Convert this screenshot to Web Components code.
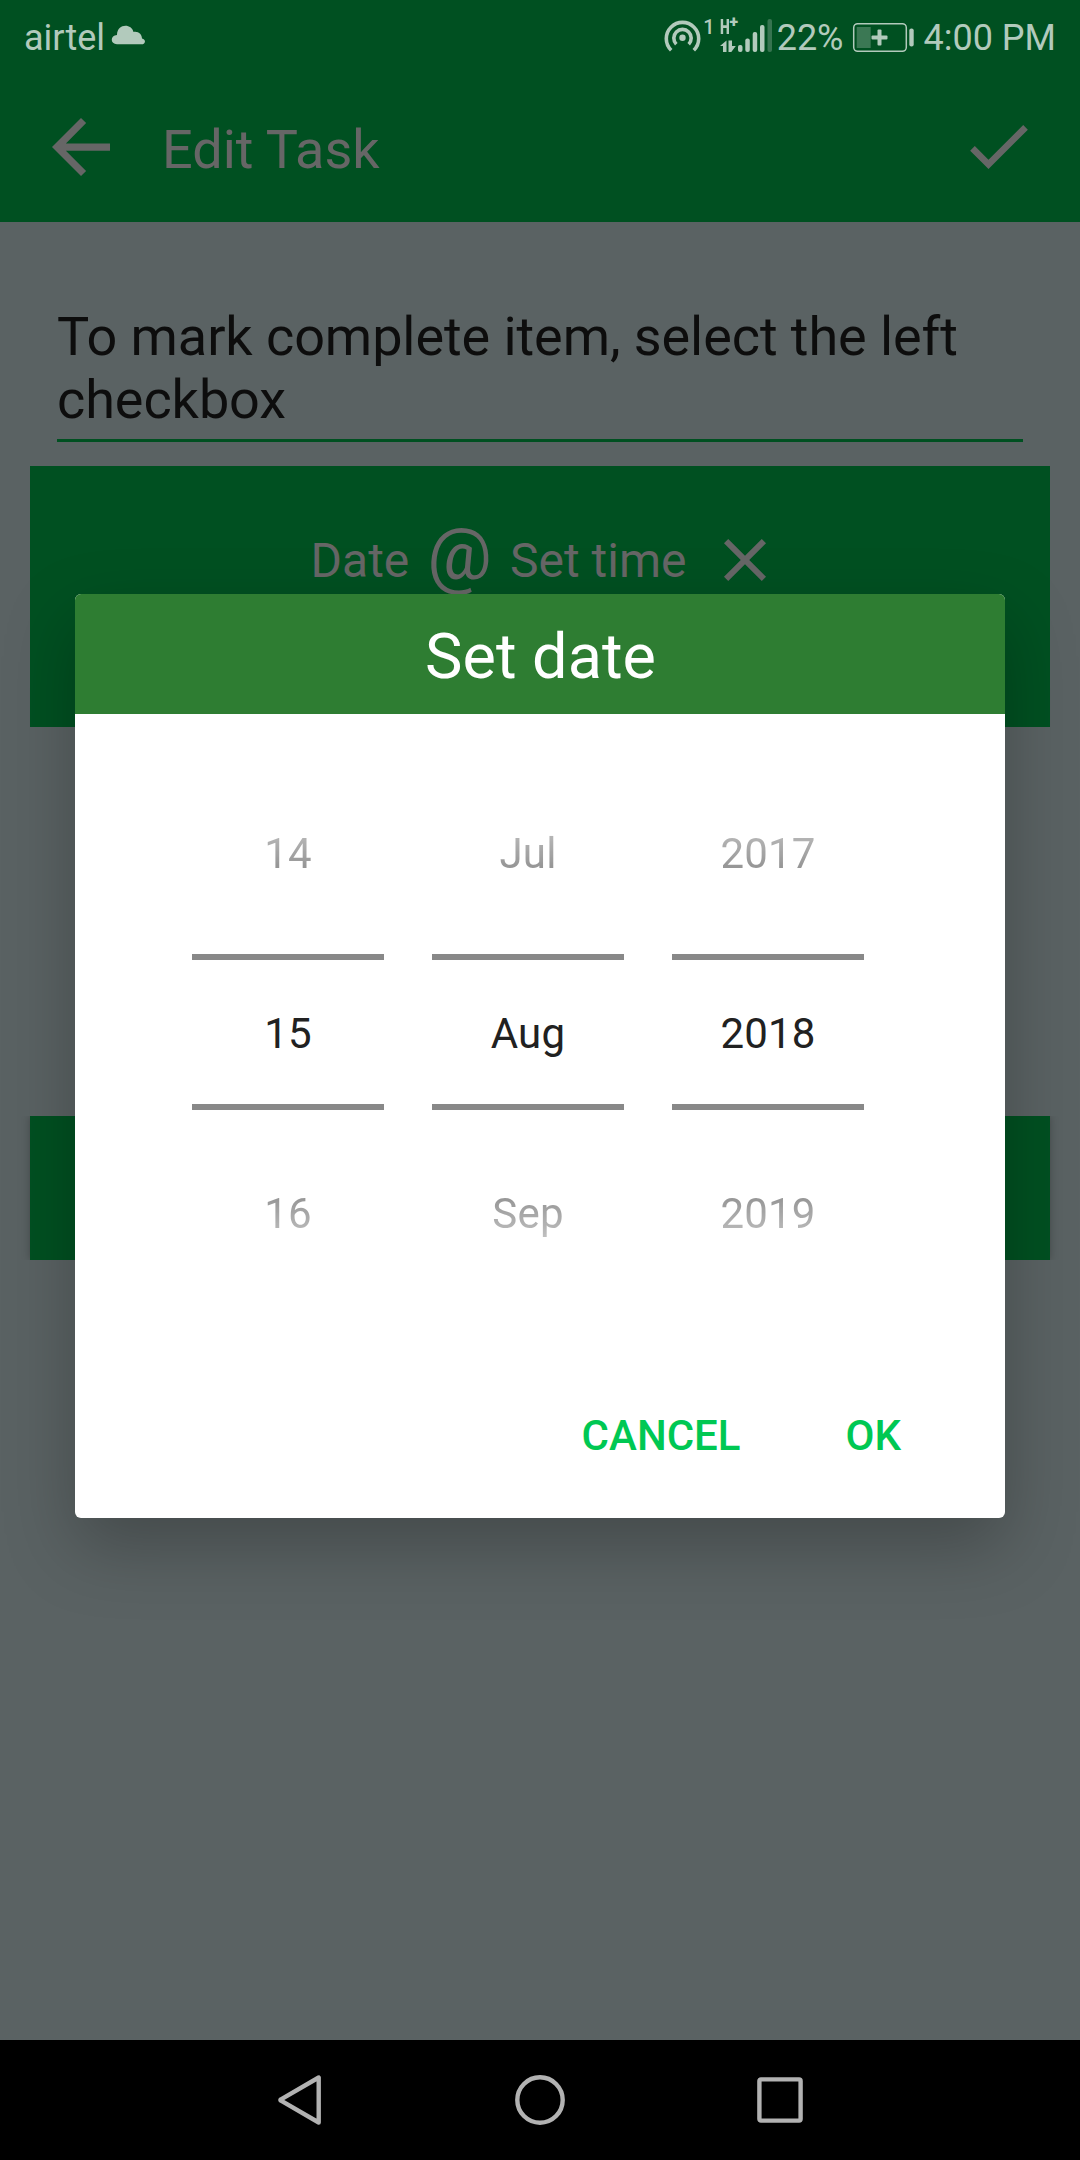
<!DOCTYPE html>
<html lang="en">
<head>
  <meta charset="UTF-8">
  <title>Edit Task</title>
  <style>
    body {
      margin: 0;
      width: 1080px;
      height: 2160px;
      overflow: hidden;
      font-family: Roboto, "Liberation Sans", sans-serif;
      --green: #005021;
      --page: #5a6263;
      --muted: #666;
      --accent: #00c853;
    }
  </style>
</head>
<body>
  <task-screen>
    <status-bar slot="status" carrier="airtel" battery="22%" time="4:00 PM"></status-bar>
    <app-bar slot="bar">Edit Task</app-bar>
    <task-field>To mark complete item, select the left checkbox</task-field>
    <reminder-card>
      <span slot="date">Date</span>
      <span slot="time">Set time</span>
    </reminder-card>
    <action-block></action-block>
    <date-dialog slot="dialog" heading="Set date">
      <wheel-column prev="14" value="15" next="16"></wheel-column>
      <wheel-column prev="Jul" value="Aug" next="Sep"></wheel-column>
      <wheel-column prev="2017" value="2018" next="2019"></wheel-column>
      <flat-button slot="actions">CANCEL</flat-button>
      <flat-button slot="actions">OK</flat-button>
    </date-dialog>
    <nav-bar slot="nav"></nav-bar>
  </task-screen>

  <script>
    class TaskScreen extends HTMLElement {
      connectedCallback() {
        this.attachShadow({ mode: 'open' });
        this.shadowRoot.innerHTML = `
          <style>
            :host {
              display: flex;
              flex-direction: column;
              position: relative;
              width: 1080px;
              height: 2160px;
              background: var(--page);
            }
            main {
              flex: 1;
              display: flex;
              flex-direction: column;
              padding: 83px 30px 0;
            }
            /* dialog floats between the status bar and the nav bar */
            .overlay {
              position: absolute;
              inset: 72px 0 120px;
              display: flex;
              align-items: center;
              justify-content: center;
            }
          </style>
          <slot name="status"></slot>
          <slot name="bar"></slot>
          <main><slot></slot></main>
          <div class="overlay"><slot name="dialog"></slot></div>
          <slot name="nav"></slot>
        `;
      }
    }

    class StatusBar extends HTMLElement {
      connectedCallback() {
        this.attachShadow({ mode: 'open' });
        this.shadowRoot.innerHTML = `
          <style>
            :host {
              display: flex;
              justify-content: space-between;
              box-sizing: border-box;
              height: 72px;
              padding: 0 24px 0 24px;
              background: var(--green);
              color: #b2cabc;
              font-size: 36px;
              line-height: 42px;
              white-space: nowrap;
            }
            .side {
              display: flex;
              padding-top: 17px;
            }
            svg {
              display: block;
              margin-top: -17px;
              fill: currentColor;
            }
            .cloud { margin-left: 6px; }
            .one {
              font-size: 20px;
              line-height: 20px;
              font-weight: 500;
              margin: 0 5px 0 1px;
            }
            .network {
              display: flex;
              align-items: flex-start;
              width: 18px;
              height: 20px;
              font-size: 21px;
              line-height: 20px;
              font-weight: 900;
            }
            .network span {
              transform: scaleX(0.66);
              transform-origin: left;
            }
            .network sup {
              font-size: 16px;
              line-height: 10px;
              margin-left: -5px;
            }
            .cell {
              position: relative;
              width: 55px;
              margin-right: 2px;
            }
            .cell svg { position: absolute; left: 0; top: 0; }
            .battery { margin: -17px 9px 0 8px; }
          </style>
          <div class="side">
            <span>${this.getAttribute('carrier')}</span>
            <svg class="cloud" width="34" height="72" viewBox="111 0 34 72">
              <path d="M117 44.300C110 44 110 35.500 117 35C117 23.500 131.500 23 133.500 32C138.500 31 142 34.500 142 38.500C146.500 39.500 145.500 44.300 141.500 44.300Z"/>
            </svg>
          </div>
          <div class="side">
            <svg width="38" height="72" viewBox="663 0 38 72">
              <g fill="none" stroke="currentColor" stroke-width="3.6">
                <path d="M670.200 50.200A16.200 16.200 0 1 1 692.800 50.200"/>
                <path d="M675.300 44.200A8.700 8.700 0 1 1 687.700 44.200"/>
              </g>
              <circle cx="681.500" cy="37.700" r="3.200"/>
            </svg>
            <span class="one">1</span>
            <div class="cell">
              <div class="network"><span>H</span><sup>+</sup></div>
              <svg width="55" height="72" viewBox="719 0 55 72">
                <path d="M719 46L725.500 40.500V52H722V46ZM727.500 40.500H731V46H734.800L730.300 52H727.500Z"/>
                <rect x="737" y="45" width="4.500" height="7" rx="2"/>
                <rect x="744.300" y="38.500" width="4.500" height="13.500" rx="2"/>
                <rect x="751.700" y="32" width="4.500" height="20" rx="2"/>
                <rect x="759" y="25" width="4.500" height="27" rx="2"/>
                <rect x="766.500" y="19" width="4.500" height="33" rx="2" opacity="0.3"/>
              </svg>
            </div>
            <span>${this.getAttribute('battery')}</span>
            <svg class="battery" width="63" height="72" viewBox="852 0 63 72">
              <rect x="853.700" y="23.700" width="52.600" height="27.600" rx="4" fill="none" stroke="currentColor" stroke-width="1.500"/>
              <rect x="856.700" y="27" width="14" height="21" opacity="0.33"/>
              <rect x="909.300" y="28.500" width="4.400" height="18" rx="2"/>
              <rect x="871.500" y="35.500" width="16" height="4" rx="1"/>
              <rect x="877.500" y="29.500" width="4" height="16" rx="1"/>
            </svg>
            <span>${this.getAttribute('time')}</span>
          </div>
        `;
      }
    }

    class AppBar extends HTMLElement {
      connectedCallback() {
        this.attachShadow({ mode: 'open' });
        this.shadowRoot.innerHTML = `
          <style>
            :host {
              display: flex;
              align-items: center;
              box-sizing: border-box;
              height: 150px;
              padding: 0 52px;
              background: var(--green);
              color: var(--muted);
            }
            svg {
              display: block;
              fill: currentColor;
            }
            h1 {
              flex: 1;
              margin: 0 0 0 52px;
              padding-top: 5px;
              font-size: 54px;
              line-height: 63px;
              font-weight: 400;
            }
          </style>
          <svg width="58" height="58" viewBox="4 4 16 16"><path d="M20 11H7.830l5.590-5.590L12 4l-8 8 8 8 1.410-1.410L7.830 13H20v-2z"/></svg>
          <h1><slot></slot></h1>
          <svg width="58" height="44" viewBox="3.410 5.590 17.590 13.410"><path d="M9 16.170L4.830 12l-1.420 1.410L9 19 21 7l-1.410-1.410z"/></svg>
        `;
      }
    }

    class TaskField extends HTMLElement {
      connectedCallback() {
        this.attachShadow({ mode: 'open' });
        this.shadowRoot.innerHTML = `
          <style>
            :host {
              display: block;
              margin: 0 27px 24px;
              padding-bottom: 8px;
              border-bottom: 3px solid var(--green);
              color: #0d0d0d;
              font-size: 54px;
              line-height: 63px;
              letter-spacing: -0.08px;
            }
          </style>
          <slot></slot>
        `;
      }
    }

    class ReminderCard extends HTMLElement {
      connectedCallback() {
        this.attachShadow({ mode: 'open' });
        this.shadowRoot.innerHTML = `
          <style>
            :host {
              display: flex;
              justify-content: center;
              align-items: baseline;
              gap: 18px;
              box-sizing: border-box;
              height: 261px;
              padding: 45px 0 0 12px;
              background: var(--green);
              color: var(--muted);
              font-size: 48px;
              white-space: nowrap;
            }
            .at {
              font-size: 72px;
              line-height: 84px;
              transform: translateY(2px);
            }
            svg {
              display: block;
              width: 72px;
              height: 72px;
              margin: 13px 0 0 5px;
              align-self: flex-start;
              fill: currentColor;
            }
          </style>
          <slot name="date"></slot>
          <span class="at">@</span>
          <slot name="time"></slot>
          <svg viewBox="0 0 24 24"><path d="M19 6.410L17.590 5 12 10.590 6.410 5 5 6.410 10.590 12 5 17.590 6.410 19 12 13.410 17.590 19 19 17.590 13.410 12z"/></svg>
        `;
      }
    }

    class ActionBlock extends HTMLElement {
      connectedCallback() {
        this.attachShadow({ mode: 'open' });
        this.shadowRoot.innerHTML = `
          <style>
            :host {
              display: block;
              height: 144px;
              margin-top: 389px;
              background: var(--green);
              box-shadow: 0 0 8px rgba(0,0,0,0.25);
              clip-path: inset(0 -12px);
            }
          </style>
        `;
      }
    }

    class DateDialog extends HTMLElement {
      connectedCallback() {
        this.attachShadow({ mode: 'open' });
        this.shadowRoot.innerHTML = `
          <style>
            :host {
              display: flex;
              flex-direction: column;
              width: 930px;
              height: 924px;
              border-radius: 6px;
              overflow: hidden;
              background: white;
              box-shadow: 0 28px 70px rgba(0,0,0,0.25);
            }
            h2 {
              box-sizing: border-box;
              height: 120px;
              margin: 0;
              padding: 4px 0 0 1px;
              background: #2e7d32;
              color: white;
              font-size: 63px;
              line-height: 117px;
              font-weight: 400;
              text-align: center;
            }
            .wheels {
              display: flex;
              gap: 48px;
              padding: 36px 0 0 117px;
            }
            .actions {
              display: flex;
              justify-content: flex-end;
              gap: 105px;
              padding: 97px 104px 0 0;
            }
          </style>
          <h2>${this.getAttribute('heading')}</h2>
          <div class="wheels"><slot></slot></div>
          <div class="actions"><slot name="actions"></slot></div>
        `;
      }
    }

    class WheelColumn extends HTMLElement {
      connectedCallback() {
        this.attachShadow({ mode: 'open' });
        this.shadowRoot.innerHTML = `
          <style>
            :host {
              display: block;
              width: 192px;
              color: #212121;
              font-size: 42px;
              letter-spacing: 0.2px;
              text-align: center;
            }
            div {
              box-sizing: border-box;
              height: 204px;
              padding-top: 3px;
              line-height: 201px;
            }
            .value {
              height: 156px;
              line-height: 141px;
              border-top: 6px solid #888;
              border-bottom: 6px solid #888;
            }
            /* neighbours fade out towards the edges of the wheel */
            .prev {
              mask-image: linear-gradient(to bottom, transparent 15px, rgba(0,0,0,0.88) 204px);
            }
            .next {
              mask-image: linear-gradient(to top, transparent 15px, rgba(0,0,0,0.88) 204px);
            }
          </style>
          <div class="prev">${this.getAttribute('prev')}</div>
          <div class="value">${this.getAttribute('value')}</div>
          <div class="next">${this.getAttribute('next')}</div>
        `;
      }
    }

    class FlatButton extends HTMLElement {
      connectedCallback() {
        this.attachShadow({ mode: 'open' });
        this.shadowRoot.innerHTML = `
          <style>
            :host {
              display: block;
              color: var(--accent);
              font-size: 42px;
              line-height: 50px;
              font-weight: 500;
            }
          </style>
          <slot></slot>
        `;
      }
    }

    class NavBar extends HTMLElement {
      connectedCallback() {
        this.attachShadow({ mode: 'open' });
        this.shadowRoot.innerHTML = `
          <style>
            :host {
              display: flex;
              justify-content: center;
              align-items: center;
              gap: 190px;
              height: 120px;
              background: black;
            }
            svg {
              width: 50px;
              height: 50px;
              fill: none;
              stroke: #b2b2b2;
              stroke-width: 4.400;
              stroke-linejoin: round;
            }
          </style>
          <svg viewBox="0 0 50 50"><path d="M43.700 2.500V47.500L6 25.700Q4.700 25 6 24.300Z"/></svg>
          <svg viewBox="0 0 50 50"><circle cx="25" cy="25" r="22.700"/></svg>
          <svg viewBox="0 0 50 50"><rect x="4.400" y="4.400" width="41.200" height="41.200" rx="1.500"/></svg>
        `;
      }
    }

    customElements.define('task-screen', TaskScreen);
    customElements.define('status-bar', StatusBar);
    customElements.define('app-bar', AppBar);
    customElements.define('task-field', TaskField);
    customElements.define('reminder-card', ReminderCard);
    customElements.define('action-block', ActionBlock);
    customElements.define('date-dialog', DateDialog);
    customElements.define('wheel-column', WheelColumn);
    customElements.define('flat-button', FlatButton);
    customElements.define('nav-bar', NavBar);
  </script>
</body>
</html>
